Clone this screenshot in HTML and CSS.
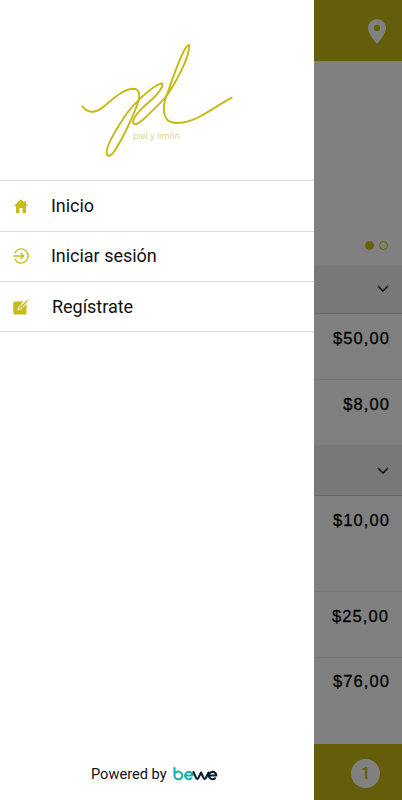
FILE: index.html
```html
<!DOCTYPE html>
<html lang="es">
<head>
    <meta charset="UTF-8">
    <meta name="viewport" content="width=device-width, initial-scale=1.0">
    <title>Piel y limón</title>
    <link rel="stylesheet" href="styles.css">
</head>
<body>
    <div class="app">
        <aside class="drawer">
            <div class="brand">
                <svg class="brand-logo" viewBox="0 0 314 180" role="img" aria-label="Piel y limón">
                    <path d="M82.300 106.300 C88 113 95 113 102 108 C111 101 122 89 133.500 88.800 C139 89 140.500 94 138.500 101 C135 112 124 136 117 147 C112 156 107.500 158 106.700 153.500 C105.500 146 117 128 125 116 C132 106 151 86 161.500 83.300 C165 84 159 93 152 99.500 C144 106 133.500 115 133.200 122 C133.500 126 138 124 142 120.500 C150 113 159 105 167 95.500 C175 84 190 57 189.200 45 C186 43 177 65 168 92 C163 103 162 114 167.500 120 C175 126 190 122 201 116 C213 109 222 103 231.700 97.700"/>
                    <text x="133" y="138.500" textLength="47">piel y limón</text>
                </svg>
            </div>
            <nav class="menu">
                <a class="menu-item" href="#">
                    <svg class="menu-icon" viewBox="0 0 16 16"><path class="solid" d="M8 1.200 L.8 8 H3 V15 H6.500 V10 H9.500 V15 H13 V8 H15.200 L13 5.900 V3 H11.500 V4.500 Z"/></svg>
                    <span>Inicio</span>
                </a>
                <a class="menu-item" href="#">
                    <svg class="menu-icon" viewBox="0 0 16 16"><path class="line" d="M1.700 5.300 A7 7 0 1 1 1.700 10.700 M.5 8 H10.500 M7.500 4.700 L10.800 8 L7.500 11.300"/></svg>
                    <span>Iniciar sesión</span>
                </a>
                <a class="menu-item register" href="#">
                    <svg class="menu-icon" viewBox="0 0 16 16"><path class="solid" d="M2 2.500 H10.500 L5 8.500 L4.500 11.500 L7.500 11 L13.500 5 V14 Q13.500 15.500 12 15.500 H2 Q.3 15.500 .3 14 V4 Q.3 2.500 2 2.500 Z"/><path class="solid" d="M5.700 10.300 L6.200 8.600 L13.500 1.500 L14.600 2.600 L7.400 9.800 Z M14 1 L14.800 .3 L15.900 1.300 L15.100 2.100 Z"/></svg>
                    <span>Regístrate</span>
                </a>
            </nav>
            <footer class="powered">
                <span>Powered by</span>
                <svg class="bewe" viewBox="0 0 45 14" role="img" aria-label="bewe">
                    <path class="teal" d="M1.500 1 V8.500 A3.900 3.900 0 1 0 3 5.400 M12.300 8.500 H19.500 A3.700 3.700 0 1 0 18.300 11.300"/>
                    <path class="navy" d="M20.500 5 L23 10.800 Q24.200 13 25.500 10.800 L28 5.500 L30.500 10.800 Q31.700 13 33 10.800 L35.500 5.500 M36.300 8.500 H43.300 A3.700 3.700 0 1 0 42.100 11.300"/>
                </svg>
            </footer>
        </aside>

        <main class="page">
            <header class="topbar">
                <svg class="pin" viewBox="0 0 18 25"><path d="M9 0 A9 9 0 0 0 0 9 C0 15 9 25 9 25 C9 25 18 15 18 9 A9 9 0 0 0 9 0 Z M9 5.800 A3.100 3.100 0 1 1 9 12 A3.100 3.100 0 1 1 9 5.800 Z"/></svg>
            </header>
            <section class="carousel">
                <i class="dot active"></i>
                <i class="dot"></i>
            </section>
            <div class="category">
                <svg class="chevron" viewBox="0 0 12 8"><path d="M1 1 L6 6 L11 1"/></svg>
            </div>
            <div class="service">$50,00</div>
            <div class="service last">$8,00</div>
            <div class="category second">
                <svg class="chevron" viewBox="0 0 12 8"><path d="M1 1 L6 6 L11 1"/></svg>
            </div>
            <div class="service tall">$10,00</div>
            <div class="service shifted">$25,00</div>
            <div class="service end">$76,00</div>
            <footer class="cart">
                <span class="cart-count">1</span>
            </footer>
        </main>
    </div>
</body>
</html>
```

FILE: styles.css
```css
* {
    margin: 0;
    padding: 0;
    box-sizing: border-box;
}
body {
    font-family: Roboto, sans-serif;
    background: #fff;
}
.app {
    display: flex;
    width: 402px;
    height: 800px;
    overflow: hidden;
}

/* drawer */
.drawer {
    display: flex;
    flex-direction: column;
    width: 314px;
    background: #fff;
}
.brand {
    height: 180px;
}
.brand-logo {
    display: block;
    width: 314px;
    height: 180px;
}
.brand-logo path {
    fill: none;
    stroke: #c6b90f;
    stroke-width: 1.9;
    stroke-linecap: round;
    stroke-linejoin: round;
}
.brand-logo text {
    font-family: "Open Sans", sans-serif;
    font-size: 8.5px;
    font-weight: 400;
    fill: #d8d088;
}
.menu {
    border-top: 1px solid #dcdcdc;
}
.menu-item {
    display: flex;
    align-items: center;
    gap: 22px;
    height: 50px;
    padding: 0 0 1px 13px;
    border-bottom: 1px solid #dcdcdc;
    font-size: 18px;
    color: #111;
    text-decoration: none;
}
.menu-item.register {
    gap: 23px;
    padding-bottom: 0;
}
.menu-item span {
    margin-top: -1px;
    letter-spacing: -0.03px;
}
.menu-icon {
    width: 16px;
    height: 16px;
}
.solid {
    fill: #c8bc18;
}
.line {
    fill: none;
    stroke: #c8bc18;
    stroke-width: 1.3;
}
.powered {
    display: flex;
    align-items: center;
    gap: 6px;
    margin-top: auto;
    padding: 0 0 17px 91px;
    font-size: 14.6px;
    color: #111;
}
.menu-item:first-child {
    height: 51px;
}
.bewe {
    width: 45px;
    height: 14px;
}
.bewe path {
    fill: none;
    stroke-width: 2.1;
    stroke-linecap: round;
    stroke-linejoin: round;
}
.bewe .teal {
    stroke: #1bb0b2;
}
.bewe .navy {
    stroke: #0b1c33;
}

/* dimmed page behind the drawer */
.page {
    display: flex;
    flex-direction: column;
    width: 88px;
    background: #808080;
}
.topbar {
    display: flex;
    justify-content: flex-end;
    height: 61px;
    padding: 19px 16px 0 0;
    background: #645d09;
}
.pin {
    width: 18px;
    height: 25px;
    fill: #808080;
}
.carousel {
    display: flex;
    justify-content: flex-end;
    align-items: flex-end;
    gap: 5px;
    height: 204px;
    padding: 0 14px 15px 0;
}
.dot {
    width: 9px;
    height: 9px;
    border: 1.5px solid #6a6306;
    border-radius: 50%;
}
.dot.active {
    background: #6a6306;
}
.category {
    display: flex;
    justify-content: flex-end;
    align-items: center;
    height: 49px;
    padding-right: 13px;
    background: #787878;
    border-bottom: 1px solid #686868;
}
.category.second {
    height: 51px;
    padding-top: 1px;
}
.chevron {
    width: 12px;
    height: 8px;
    fill: none;
    stroke: #000;
    stroke-width: 1.4;
}
.service {
    height: 66px;
    padding: 14px 12px 0 0;
    border-bottom: 1px solid #747474;
    font-family: "Liberation Sans", sans-serif;
    font-size: 16.5px;
    line-height: 20px;
    letter-spacing: 1.1px;
    text-align: right;
    color: #000;
    -webkit-text-stroke: 0.3px #000;
}
.service.last {
    height: 65px;
    border-bottom: none;
}
.service.tall {
    height: 96px;
}
.service.shifted {
    padding-right: 13px;
}
.service.end {
    height: 86px;
    padding-top: 13px;
    border-bottom: none;
}
.cart {
    display: flex;
    justify-content: flex-end;
    align-items: center;
    flex: 1;
    padding: 3px 22px 0 0;
    background: #645d09;
}
.cart-count {
    width: 29px;
    height: 29px;
    border-radius: 50%;
    background: #808080;
    color: #645d09;
    font-size: 17px;
    font-weight: 500;
    line-height: 29px;
    text-align: center;
}
```
